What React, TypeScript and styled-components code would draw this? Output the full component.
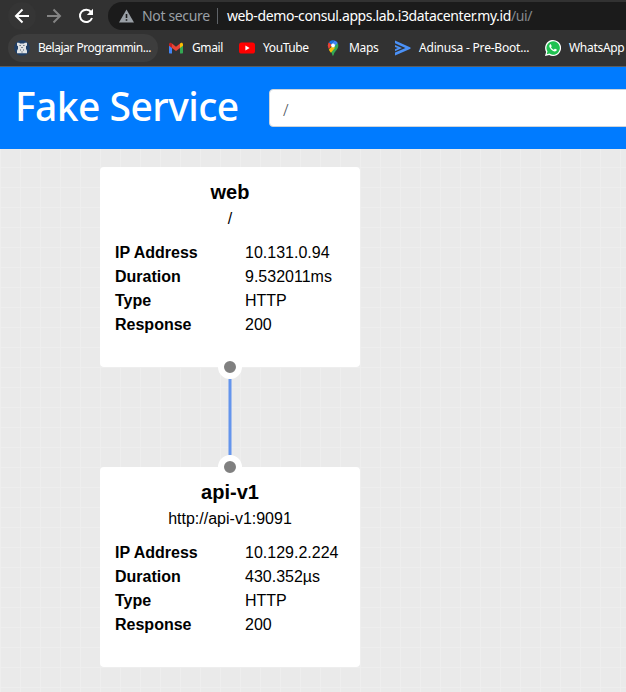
import React from 'react';
import styled, { createGlobalStyle } from 'styled-components';

const GlobalStyle = createGlobalStyle`
  * { box-sizing: border-box; }
  html, body { margin: 0; padding: 0; overflow: hidden; }
  body { background: #eaeaea; }
`;

const uiFont = `"Noto Sans", "Open Sans", sans-serif`;
const cardFont = `"Liberation Sans", Arial, sans-serif`;

const Page = styled.div`
  width: 626px;
  height: 692px;
  overflow: hidden;
  display: flex;
  flex-direction: column;
`;

const Chrome = styled.header`
  height: 67px;
  flex: none;
  background: #323232;
  border-bottom: 1px solid #5c5d5e;
  font-family: ${uiFont};
`;

const Toolbar = styled.div`
  display: flex;
  align-items: center;
  height: 32px;
  padding-left: 8px;
`;

const NavButton = styled.span<{ $lit?: boolean }>`
  display: flex;
  flex: none;
  align-items: center;
  justify-content: center;
  width: 28px;
  height: 28px;
  margin-right: 4px;
  border-radius: 14px;
  background: ${(p) => (p.$lit ? '#353535' : 'transparent')};
`;

const AddressBar = styled.div`
  display: flex;
  align-items: center;
  flex: none;
  width: 560px;
  height: 28px;
  margin-left: 4px;
  padding-left: 11px;
  border-radius: 14px;
  background: #1b1b1b;
  font-size: 14px;
  line-height: 20px;
  white-space: nowrap;
`;

const Security = styled.span`
  width: 75px;
  margin-left: 8px;
  color: #9aa0a6;
  letter-spacing: -0.35px;
`;

const Divider = styled.span`
  width: 1px;
  height: 16px;
  background: #5f6368;
  margin-right: 9px;
`;

const Url = styled.span`
  color: #fff;
  letter-spacing: -0.39px;
`;

const UrlPath = styled.span`
  color: #85898d;
`;

const Bookmarks = styled.nav`
  display: flex;
  align-items: center;
  height: 31px;
  padding-left: 8px;
`;

const Bookmark = styled.a<{ $width: number; $active?: boolean; $spacing: number; $gap?: number }>`
  display: flex;
  align-items: center;
  flex: none;
  gap: ${(p) => p.$gap ?? 8}px;
  width: ${(p) => p.$width}px;
  height: 28px;
  margin-right: 4px;
  padding-left: 6px;
  border-radius: 14px;
  background: ${(p) => (p.$active ? '#3d3d3d' : 'transparent')};
  color: #fff;
  font-size: 12px;
  line-height: 16px;
  letter-spacing: ${(p) => p.$spacing}px;
  white-space: nowrap;
  svg { flex: none; }
`;

const Banner = styled.section`
  display: flex;
  align-items: center;
  flex: none;
  height: 82px;
  padding-left: 15px;
  background: #007bff;
`;

const Title = styled.h1`
  flex: none;
  width: 254px;
  margin: 0 0 4px;
  color: #fff;
  font: 500 39px/48px ${uiFont};
  letter-spacing: -0.55px;
  white-space: nowrap;
`;

const PathField = styled.div`
  flex: none;
  width: 420px;
  height: 38px;
  padding: 8px 12px 6px 13px;
  border: 1px solid #ced4da;
  border-radius: 4px;
  background: #fff;
  color: #495057;
  font: 300 16px/24px ${uiFont};
`;

const Canvas = styled.main`
  position: relative;
  flex: 1;
  background-color: #eaeaea;
  background-image:
    linear-gradient(90deg, #eeeeee 1px, transparent 1px),
    linear-gradient(#eeeeee 1px, transparent 1px);
  background-size: 20px 20px;
  background-position: 0 18px;
`;

const Link = styled.svg`
  position: absolute;
  left: 224px;
  top: 218px;
`;

const Node = styled.article<{ $top: number }>`
  position: absolute;
  left: 100px;
  top: ${(p) => p.$top}px;
  width: 260px;
  height: 200px;
  padding: 13px 15px;
  border-radius: 4px;
  background: #fff;
  color: #000;
  font: 16px/24px ${cardFont};
`;

const NodeName = styled.h2`
  margin: 0;
  text-align: center;
  font: bold 20px/24px ${cardFont};
`;

const NodeUrl = styled.div`
  height: 24px;
  margin: 3px 0 10px;
  text-align: center;
`;

const Facts = styled.dl`
  display: grid;
  grid-template-columns: 130px 1fr;
  margin: 0;
`;

const Label = styled.dt`
  font-weight: bold;
`;

const Value = styled.dd`
  margin: 0;
`;

const Port = styled.span<{ $edge: 'top' | 'bottom' }>`
  position: absolute;
  left: 118px;
  ${(p) => p.$edge}: -12px;
  width: 24px;
  height: 24px;
  border: 6px solid #fff;
  border-radius: 50%;
  background: #808080;
`;

const BackIcon = () => (
  <svg width="16" height="16" viewBox="0 0 16 16" fill="none" stroke="#fff" strokeWidth="2">
    <path d="M15 8H2.5M8.5 1.5 2 8l6.5 6.5" />
  </svg>
);

const ForwardIcon = () => (
  <svg width="16" height="16" viewBox="0 0 16 16" fill="none" stroke="#848484" strokeWidth="2">
    <path d="M1 8h12.5M7.5 1.5 14 8l-6.5 6.5" />
  </svg>
);

const ReloadIcon = () => (
  <svg width="16" height="16" viewBox="0 0 16 16">
    <path d="M13.2 4.2A6.2 6.2 0 1 0 14 10" fill="none" stroke="#fff" strokeWidth="2" />
    <path d="M15 .8V7H8.8z" fill="#fff" />
  </svg>
);

const WarningIcon = () => (
  <svg width="15" height="14" viewBox="0 0 15 14">
    <path d="M7.5.5 15 13.5H0z" fill="#9aa0a6" />
    <path d="M6.7 5h1.6v4H6.7zM6.7 10.2h1.6v1.6H6.7z" fill="#1b1b1b" />
  </svg>
);

const CourseIcon = () => (
  <svg width="16" height="16" viewBox="0 0 16 16">
    <circle cx="8" cy="8" r="7.8" fill="#203f66" />
    <path d="M3 2.8h2.2l.8.8h4l.8-.8H13v2.700l-1 .8v2.400l1 2v2.500H3v-2.500l1-2V6.300l-1-.8z" fill="#dfe2e5" />
    <path d="M5.500 5h1.300v1H5.500zM9.200 5h1.300v1H9.200zM7.300 7h1.400v1H7.300zM6 9.600h1v1H6zM9 9.600h1v1H9zM7.400 11.400h1.200v1H7.400z" fill="#52606f" />
  </svg>
);

const GmailIcon = () => (
  <svg width="16" height="16" viewBox="0 0 16 16">
    <path d="M1 5v7.5c0 .6.4 1 1 1h2V7z" fill="#4285f4" />
    <path d="M12 7v6.5h2c.6 0 1-.4 1-1V5z" fill="#34a853" />
    <path d="M12 3.6 8 6.7 4 3.6V8l4 3 4-3z" fill="#ea4335" />
    <path d="M4 8V3.6l-.8-.6C2.3 2.3 1 3 1 4.2v1.5z" fill="#c5221f" />
    <path d="M12 8V3.6l.8-.6c.9-.7 2.2 0 2.2 1.2v1.5z" fill="#fbbc04" />
  </svg>
);

const YouTubeIcon = () => (
  <svg width="16" height="16" viewBox="0 0 16 16">
    <rect y="2.4" width="16" height="11.2" rx="2.6" fill="#f00" />
    <path d="M6.4 5.6v4.8l4.2-2.4z" fill="#fff" />
  </svg>
);

const MapsIcon = () => (
  <svg width="16" height="16" viewBox="0 0 16 16">
    <path d="M3.9 9c.8 1.4 2.2 2.6 3 4.4.5 1.4.5 2.3 1.1 2.3s.7-1.2 1.2-2.4c.9-2.2 4.1-4.3 4.1-7.8 0-.9-.2-1.7-.6-2.5z" fill="#34a853" />
    <path d="M3.9 2.2 7 4.8 3.9 9C3.2 8 2.8 6.8 2.8 5.5c0-1.3.4-2.4 1.1-3.3z" fill="#ea4335" />
    <path d="m6.3 6.9-2.5 2.9c.6 1 1.4 1.8 2.1 2.9l4.4-5.2z" fill="#fbbc04" />
    <path d="M3.9 2.2A5.2 5.2 0 0 1 9.6.5L6.3 4.3z" fill="#1a73e8" />
    <path d="M9.6.5c1.4.4 2.5 1.3 3.1 2.6L9.5 6.6 6.3 4.3z" fill="#4285f4" />
    <circle cx="8" cy="5.5" r="1.9" fill="#fff" />
  </svg>
);

const AdinusaIcon = () => (
  <svg width="18" height="16" viewBox="0 0 18 16" fill="#4b91f7">
    <path d="M1 .5 16.5 7.5v1.2L1 15.5v-3L11.5 8.1 1 3.3z" />
    <path d="M1 4.9 8 8.1 1 11.2V9.2L3.8 8.1 1 6.9z" />
  </svg>
);

const WhatsAppIcon = () => (
  <svg width="16" height="16" viewBox="0 0 16 16">
    <path d="M0 16 1.1 11.9A8 8 0 1 1 4.2 15z" fill="#fff" />
    <path d="M1.7 14.3 2.5 11.6A6.7 6.7 0 1 1 4.5 13.6z" fill="#20c151" />
    <path d="M5.4 4.2c-.3 0-1.1.6-1.1 1.9 0 1.2.9 2.4 1.8 3.4 1.3 1.3 2.7 2 3.7 2 .9 0 1.9-.7 2-1.4.1-.5.1-.6-.1-.7l-1.5-.7c-.3-.1-.4 0-.6.2l-.6.7c-.2.2-.5.1-.9-.1-.9-.5-1.5-1.2-2-2-.1-.2 0-.4.2-.6l.3-.5c.1-.2 0-.4-.1-.7l-.5-1.2c-.1-.3-.3-.3-.6-.3z" fill="#fff" />
  </svg>
);

interface ServiceNode {
  name: string;
  url: string;
  facts: [string, string][];
  top: number;
  port: 'top' | 'bottom';
}

const services: ServiceNode[] = [
  {
    name: 'web',
    url: '/',
    top: 18,
    port: 'bottom',
    facts: [['IP Address', '10.131.0.94'], ['Duration', '9.532011ms'], ['Type', 'HTTP'], ['Response', '200']],
  },
  {
    name: 'api-v1',
    url: 'http://api-v1:9091',
    top: 318,
    port: 'top',
    facts: [['IP Address', '10.129.2.224'], ['Duration', '430.352µs'], ['Type', 'HTTP'], ['Response', '200']],
  },
];

export default function App() {
  return (
    <Page>
      <GlobalStyle />
      <Chrome>
        <Toolbar>
          <NavButton $lit><BackIcon /></NavButton>
          <NavButton><ForwardIcon /></NavButton>
          <NavButton><ReloadIcon /></NavButton>
          <AddressBar>
            <WarningIcon />
            <Security>Not secure</Security>
            <Divider />
            <Url>web-demo-consul.apps.lab.i3datacenter.my.id<UrlPath>/ui/</UrlPath></Url>
          </AddressBar>
        </Toolbar>
        <Bookmarks>
          <Bookmark $width={150} $spacing={-0.48} $active><CourseIcon />Belajar Programmin...</Bookmark>
          <Bookmark $width={67} $spacing={-0.4}><GmailIcon />Gmail</Bookmark>
          <Bookmark $width={82} $spacing={-0.4}><YouTubeIcon />YouTube</Bookmark>
          <Bookmark $width={65} $spacing={-0.3}><MapsIcon />Maps</Bookmark>
          <Bookmark $width={147} $spacing={-0.2} $gap={7}><AdinusaIcon />Adinusa - Pre-Boot...</Bookmark>
          <Bookmark $width={100} $spacing={-0.3}><WhatsAppIcon />WhatsApp</Bookmark>
        </Bookmarks>
      </Chrome>
      <Banner>
        <Title>Fake Service</Title>
        <PathField>/</PathField>
      </Banner>
      <Canvas>
        {services.map((s) => (
          <Node key={s.name} $top={s.top}>
            <NodeName>{s.name}</NodeName>
            <NodeUrl>{s.url}</NodeUrl>
            <Facts>
              {s.facts.map(([label, value]) => (
                <React.Fragment key={label}>
                  <Label>{label}</Label>
                  <Value>{value}</Value>
                </React.Fragment>
              ))}
            </Facts>
            <Port $edge={s.port} />
          </Node>
        ))}
        <Link width="12" height="100" viewBox="0 0 12 100">
          <path d="M6 12V88" stroke="#6495ed" strokeWidth="3" />
        </Link>
      </Canvas>
    </Page>
  );
}
